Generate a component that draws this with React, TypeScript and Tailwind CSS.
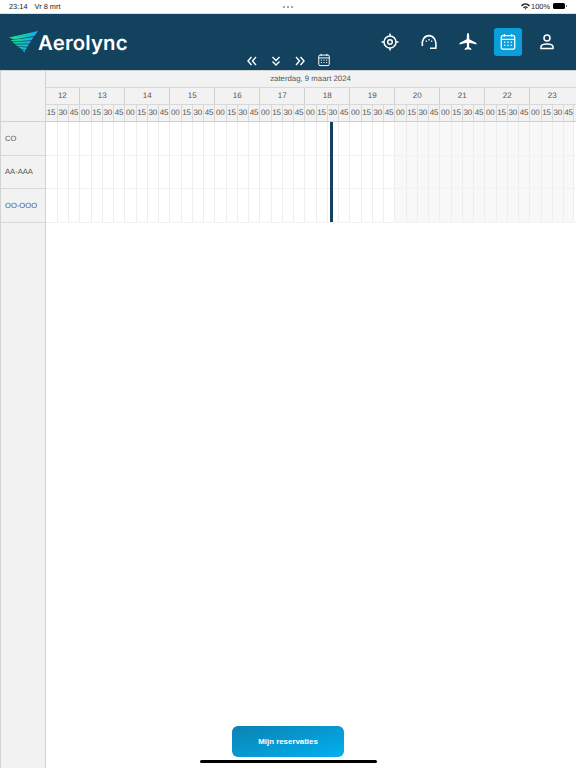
import React from 'react';

const hours = [12, 13, 14, 15, 16, 17, 18, 19, 20, 21, 22, 23];
const aircraft = ['CO', 'AA-AAA', 'OO-OOO'];
const slots = hours.flatMap((h) =>
  (h === 12 ? ['15', '30', '45'] : ['00', '15', '30', '45']).map((m) => ({ h, m })),
);

const Wing = () => (
  <svg width="30" height="22" viewBox="0 0 30 22" className="shrink-0">
    <defs>
      <linearGradient id="wing" gradientUnits="userSpaceOnUse" x1="3" y1="6" x2="23" y2="15">
        <stop offset="0" stopColor="#25dc8c" />
        <stop offset="0.5" stopColor="#14c4b4" />
        <stop offset="1" stopColor="#1ba8f0" />
      </linearGradient>
    </defs>
    <path d="M0 6.5 L29 0 L25.5 5 L5 8.5 Z" fill="url(#wing)" />
    <path d="M1.5 9.2 L24.5 6 L22.5 9.2 L4 10.6 Z" fill="url(#wing)" />
    <path d="M3.5 11.2 L22 10 L20.5 12.6 L6 12.8 Z" fill="url(#wing)" />
    <path d="M6 13.4 L20 13.3 L18.5 15.8 L9 15.2 Z" fill="url(#wing)" />
    <path d="M9 15.8 L18 16.4 L16.5 19 L12.5 18 Z" fill="url(#wing)" />
    <path d="M13 18.6 L16.2 19.6 L15.5 21.5 Z" fill="url(#wing)" />
  </svg>
);

const CalendarIcon = ({ size }: { size: number }) => (
  <svg width={size} height={size} viewBox="0 0 20 20" fill="none" stroke="white" strokeWidth="1.4">
    <rect x="2.5" y="3" width="15" height="15" rx="1.8" />
    <path d="M2.5 7h15M6 1.2v3M14 1.2v3" />
    <g fill="white" stroke="none">
      <rect x="5.5" y="9.5" width="1.6" height="1.4" />
      <rect x="9.2" y="9.5" width="1.6" height="1.4" />
      <rect x="12.9" y="9.5" width="1.6" height="1.4" />
      <rect x="5.5" y="13" width="1.6" height="1.4" />
      <rect x="9.2" y="13" width="1.6" height="1.4" />
      <rect x="12.9" y="13" width="1.6" height="1.4" />
    </g>
  </svg>
);

const TargetIcon = () => (
  <svg width="18" height="18" viewBox="0 0 18 18" fill="none" stroke="white" strokeWidth="1.5">
    <circle cx="9" cy="9" r="6" />
    <circle cx="9" cy="9" r="2.3" />
    <path d="M9 0.5v2.5M9 15v2.5M0.5 9H3M15 9h2.5" />
  </svg>
);

const GaugeIcon = () => (
  <svg width="18" height="18" viewBox="0 0 18 18" fill="none" stroke="white" strokeWidth="1.6">
    <path d="M2.4 13 C1.4 7 4.6 2.6 9 2.6 C13.6 2.6 16.8 7 15.8 15.2 L10 15.2" />
    <path d="M9 6v1.6M5.8 7.6l1 1M12.2 7.6l-1 1" strokeWidth="1.3" />
  </svg>
);

const PlaneIcon = () => (
  <svg width="18" height="18" viewBox="0 0 18 18" fill="white">
    <path d="M8 0.8 C8 0.2 10 0.2 10 0.8 L10.3 6.3 L17.5 10 L17.5 11.5 L10.3 9.8 L10 14 L12.3 15.8 L12.3 17 L9 16.2 L5.7 17 L5.7 15.8 L8 14 L7.7 9.8 L0.5 11.5 L0.5 10 L7.7 6.3 Z" />
  </svg>
);

const UserIcon = () => (
  <svg width="18" height="18" viewBox="0 0 18 18" fill="none" stroke="white" strokeWidth="1.5">
    <circle cx="9" cy="5" r="3" />
    <path d="M3 15.5 V13.8 C3 12 5.5 11 9 11 C12.5 11 15 12 15 13.8 V15.5 Z" />
  </svg>
);

const Chevrons = ({ d }: { d: string }) => (
  <svg width="12" height="12" viewBox="0 0 12 12" fill="none" stroke="white" strokeWidth="1.4">
    <path d={d} />
  </svg>
);

const StatusBar = () => (
  <div className="h-[14px] shrink-0 bg-white border-b border-[#e0e0e0] flex items-center justify-between pl-[9px] pr-[9px] text-[7.4px] text-[#222]">
    <div className="flex w-[180px] gap-[7px]">
      <span>23:14</span>
      <span>Vr 8 mrt</span>
    </div>
    <div className="flex gap-[2px]">
      <span className="w-[2px] h-[2px] rounded-full bg-[#888]" />
      <span className="w-[2px] h-[2px] rounded-full bg-[#888]" />
      <span className="w-[2px] h-[2px] rounded-full bg-[#888]" />
    </div>
    <div className="flex w-[180px] justify-end items-center">
      <svg width="9" height="7" viewBox="0 0 9 7" fill="#222" className="mr-[1px]">
        <path d="M0 2.4 C2.5 -0.5 6.5 -0.5 9 2.4 L8 3.4 C6 1.3 3 1.3 1 3.4 Z" />
        <path d="M2 4.2 C3.4 2.8 5.6 2.8 7 4.2 L6 5.2 C5.1 4.3 3.9 4.3 3 5.2 Z" />
        <path d="M3.6 5.6 C4.1 5.1 4.9 5.1 5.4 5.6 L4.5 6.7 Z" />
      </svg>
      <span className="mr-[3px]">100%</span>
      <span className="w-[12px] h-[6px] rounded-[1.5px] bg-black" />
      <span className="w-[1px] h-[2px] bg-[#777] ml-[1px]" />
    </div>
  </div>
);

const NavBar = () => (
  <div className="h-[56px] shrink-0 bg-[#13425f] flex">
    <div className="w-[240px] pl-[9px] pt-[17px] flex items-start shrink-0">
      <Wing />
      <span className="text-white text-[20.4px] leading-[22px] mt-[1px] font-semibold tracking-[0.15px] -ml-[1px] font-['Inter',sans-serif]">
        Aerolync
      </span>
    </div>
    <div className="w-[96px] shrink-0 grid grid-cols-4 items-end justify-items-center pb-[3px]">
      <Chevrons d="M5.5 2 L2 6 L5.5 10 M10 2 L6.5 6 L10 10" />
      <Chevrons d="M2.5 2 L6 5.5 L9.5 2 M2.5 6.5 L6 10 L9.5 6.5" />
      <Chevrons d="M2 2 L5.5 6 L2 10 M6.5 2 L10 6 L6.5 10" />
      <CalendarIcon size={14} />
    </div>
    <div className="flex items-center pl-[34.5px]">
      {[<TargetIcon />, <GaugeIcon />, <PlaneIcon />].map((icon, i) => (
        <div key={i} className="w-[39px] h-[28px] flex items-center justify-center">
          {icon}
        </div>
      ))}
      <div className="w-[28px] h-[28px] ml-[6.5px] rounded-[3px] bg-[#0a9fdb] flex items-center justify-center">
        <CalendarIcon size={18} />
      </div>
      <div className="w-[18px] h-[18px] ml-[16px]">
        <UserIcon />
      </div>
    </div>
  </div>
);

const Sidebar = () => (
  <div className="w-[45.5px] shrink-0 bg-[#f2f2f2] border-l border-r border-[#d2d2d2] flex flex-col">
    <div className="h-[51px] border-b border-[#d2d2d2]" />
    {aircraft.map((name) => (
      <div
        key={name}
        className="h-[33.5px] border-b border-[#d8d8d8] flex items-center pl-[4px] text-[7.6px] text-[#555]"
      >
        {name}
      </div>
    ))}
  </div>
);

const Timeline = () => (
  <div className="w-[530px] shrink-0 relative">
    <div className="h-[17px] bg-[#f2f2f2] border-b border-[#d8d8d8] flex items-center justify-center text-[7.8px] text-[#555]">
      zaterdag, 9 maart 2024
    </div>
    <div className="h-[17px] flex bg-[#f2f2f2] border-b border-[#d8d8d8]">
      {hours.map((h) => (
        <div
          key={h}
          className={`${h === 12 ? 'w-[33.75px]' : 'w-[45px] border-l border-[#d0d0d0]'} flex items-center justify-center text-[8px] text-[#555]`}
        >
          {h}
        </div>
      ))}
    </div>
    <div className="h-[17px] flex bg-[#f2f2f2] border-b border-[#cfcfcf]">
      {slots.map((s, i) => (
        <div
          key={`${s.h}-${s.m}`}
          className={`w-[11.25px] ${i > 0 ? 'border-l border-[#d8d8d8]' : ''} last:border-r flex items-center justify-center text-[8px] text-[#555]`}
        >
          {s.m}
        </div>
      ))}
    </div>
    {aircraft.map((name) => (
      <div key={name} className="h-[33.5px] flex border-b border-[#f2f2f2]">
        {slots.map((s, i) => (
          <div
            key={`${s.h}-${s.m}`}
            className={`w-[11.25px] ${i > 0 ? 'border-l border-[#eeeeee]' : ''} last:border-r ${s.h >= 20 ? 'bg-[#f8f8f8]' : 'bg-white'}`}
          />
        ))}
      </div>
    ))}
    {/* current time marker */}
    <div className="absolute left-[284.5px] top-[51px] w-[3px] h-[100px] bg-[#13425f]" />
  </div>
);

export default function App() {
  return (
    <div className="relative w-[576px] h-[768px] overflow-hidden bg-white flex flex-col antialiased [text-rendering:geometricPrecision] font-['Liberation_Sans',sans-serif]">
      <StatusBar />
      <NavBar />
      <div className="flex-1 flex border-t border-[#d2d2d2]">
        <Sidebar />
        <Timeline />
      </div>
      <button className="absolute left-[232px] top-[726px] w-[112px] h-[31px] rounded-[6px] bg-gradient-to-br from-[#0a82b2] to-[#00b0f0] text-white text-[7.9px] font-bold">
        Mijn reservaties
      </button>
      <div className="absolute left-[200px] top-[760px] w-[177px] h-[3px] rounded-full bg-black" />
    </div>
  );
}
